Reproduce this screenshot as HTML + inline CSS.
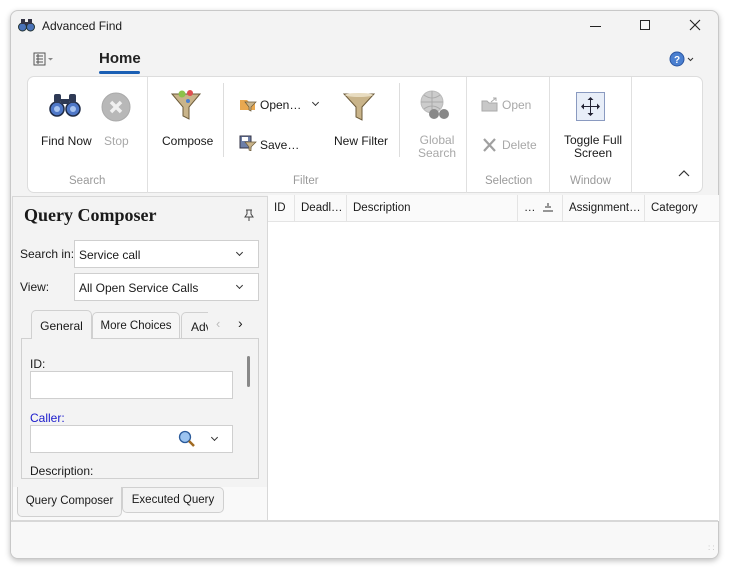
<!DOCTYPE html>
<html><head><style>
*{box-sizing:border-box;margin:0;padding:0}
body{width:729px;height:569px;background:#fff;font-family:"Liberation Sans",sans-serif;font-size:12px;color:#1a1a1a;position:relative;overflow:hidden}
.a{position:absolute;white-space:nowrap}
.win{left:10px;top:10px;width:709px;height:549px;background:#f3f3f3;border:1px solid #c8c8c8;border-radius:8px;box-shadow:0 2px 6px rgba(0,0,0,.25);overflow:hidden}
.lbl{color:#9a9a9a;font-size:11.5px}
.dis{color:#a8a8a8}
.hdr{top:195px;height:27px;border-bottom:1px solid #e4e4e4;border-right:1px solid #e4e4e4;background:#fafafa;padding:7px 6px;font-size:11.5px;white-space:nowrap;overflow:hidden}
.inp{background:#fff;border:1px solid #cfcfcf}
.chev{width:6px;height:6px;border-right:1.3px solid #333;border-bottom:1.3px solid #333;transform:rotate(45deg)}
</style></head><body>
<div class="a win"></div>
<svg class="a" style="left:18px;top:18px" width="17" height="14" viewBox="0 0 17 14"><circle cx="4.5" cy="9" r="4" fill="#4a72b8" stroke="#233" stroke-width="1"/><circle cx="12.5" cy="9" r="4" fill="#4a72b8" stroke="#233" stroke-width="1"/><rect x="3" y="1" width="4" height="5" fill="#334"/><rect x="10" y="1" width="4" height="5" fill="#334"/><rect x="7" y="4" width="3" height="3" fill="#334"/></svg>
<div class="a" style="left:42px;top:19px;font-size:12px">Advanced Find</div>
<div class="a" style="left:590px;top:26px;width:11px;height:1px;background:#222"></div>
<div class="a" style="left:640px;top:20px;width:10px;height:10px;border:1px solid #222"></div>
<svg class="a" style="left:689px;top:19px" width="12" height="12"><path d="M1 1L11 11M11 1L1 11" stroke="#222" stroke-width="1.1"/></svg>
<svg class="a" style="left:33px;top:52px" width="22" height="14"><rect x="1" y="1" width="11" height="12" fill="none" stroke="#555"/><path d="M3 4h7M3 7h7M3 10h7M5 2v10" stroke="#555"/><path d="M15 6l2.5 2.5L20 6z" fill="#888"/></svg>
<div class="a" style="left:99px;top:50px;font-size:15px;font-weight:bold;color:#222">Home</div>
<div class="a" style="left:99px;top:71px;width:41px;height:3px;background:#1a5fb4;border-radius:2px"></div>
<svg class="a" style="left:669px;top:51px" width="28" height="16"><circle cx="8" cy="8" r="7" fill="#4a7fd0" stroke="#2a55a0"/><text x="8" y="12" font-size="10" font-weight="bold" fill="#fff" text-anchor="middle" font-family="Liberation Sans">?</text><path d="M19 7l2.5 2.5L24 7" stroke="#333" fill="none"/></svg>
<div class="a" style="left:27px;top:76px;width:676px;height:117px;background:#fff;border:1px solid #ddd;border-radius:7px"></div>
<div class="a" style="left:147px;top:77px;width:1px;height:116px;background:#e0e0e0"></div>
<div class="a" style="left:466px;top:77px;width:1px;height:116px;background:#e0e0e0"></div>
<div class="a" style="left:549px;top:77px;width:1px;height:116px;background:#e0e0e0"></div>
<div class="a" style="left:631px;top:77px;width:1px;height:116px;background:#e0e0e0"></div>
<div class="a" style="left:223px;top:83px;width:1px;height:74px;background:#ddd"></div>
<div class="a" style="left:399px;top:83px;width:1px;height:74px;background:#ddd"></div>
<svg class="a" style="left:49px;top:92px" width="32" height="26"><circle cx="8" cy="17" r="7" fill="#4f78c8" stroke="#1e2a44" stroke-width="1.5"/><circle cx="24" cy="17" r="7" fill="#4f78c8" stroke="#1e2a44" stroke-width="1.5"/><rect x="5" y="2" width="7" height="9" rx="2" fill="#2e3a55"/><rect x="20" y="2" width="7" height="9" rx="2" fill="#2e3a55"/><rect x="12" y="7" width="8" height="5" fill="#2e3a55"/><circle cx="8" cy="17" r="3" fill="#a8c4f0"/><circle cx="24" cy="17" r="3" fill="#a8c4f0"/></svg>
<div class="a" style="left:41px;top:134px">Find Now</div>
<svg class="a" style="left:101px;top:92px" width="30" height="30"><circle cx="15" cy="15" r="14" fill="#b8b8b8" stroke="#aaa"/><path d="M10 10l10 10M20 10l-10 10" stroke="#f0f0f0" stroke-width="3.5"/></svg>
<div class="a dis" style="left:104px;top:134px">Stop</div>
<div class="a lbl" style="left:69px;top:175px">Search</div>
<svg class="a" style="left:170px;top:89px" width="32" height="32"><path d="M2 5h28L19 18v12l-6 -3V18z" fill="#c9b48a" stroke="#6b5a3a"/><circle cx="12" cy="5" r="3.5" fill="#8cc24a"/><circle cx="20" cy="4" r="3" fill="#e05050"/><circle cx="18" cy="12" r="2" fill="#4a7fd0"/></svg>
<div class="a" style="left:162px;top:134px">Compose</div>
<svg class="a" style="left:239px;top:96px" width="18" height="16"><path d="M1 4h7l2 2h6v8H1z" fill="#e8a850"/><path d="M6 6h11l-5 5v4l-2-1v-3z" fill="#c9b48a" stroke="#6b5a3a" stroke-width=".7"/></svg>
<div class="a" style="left:260px;top:98px">Open…</div>
<div class="a chev" style="left:313px;top:100px;width:5px;height:5px"></div>
<svg class="a" style="left:239px;top:135px" width="18" height="16"><rect x="1" y="1" width="11" height="12" fill="#6d7fa8" stroke="#334"/><rect x="3" y="2" width="6" height="4" fill="#fff"/><path d="M6 7h11l-5 5v4l-2-1v-3z" fill="#c9b48a" stroke="#6b5a3a" stroke-width=".7"/></svg>
<div class="a" style="left:260px;top:138px">Save…</div>
<svg class="a" style="left:343px;top:91px" width="32" height="30"><path d="M1 3h30L19 16v13l-6-3V16z" fill="#c9b48a" stroke="#6b5a3a"/><ellipse cx="16" cy="4" rx="14" ry="2" fill="#e8dcc0"/></svg>
<div class="a" style="left:334px;top:134px">New Filter</div>
<svg class="a" style="left:418px;top:90px" width="32" height="32"><circle cx="14" cy="12" r="11" fill="#ccc" stroke="#bbb"/><path d="M3 12h22M14 1v22M6 5q8 6 16 0M6 19q8-6 16 0" stroke="#aaa" fill="none"/><circle cx="16" cy="24" r="5" fill="#888"/><circle cx="26" cy="24" r="5" fill="#888"/></svg>
<div class="a dis" style="left:418px;top:134px;text-align:center;line-height:13px">Global<br>Search</div>
<div class="a lbl" style="left:293px;top:175px">Filter</div>
<svg class="a" style="left:481px;top:96px" width="18" height="16"><path d="M1 5h5l2 2h8v8H1z" fill="#c8c8c8" stroke="#aaa"/><path d="M10 6l5-4M12 2h3v3" stroke="#aaa" fill="none"/></svg>
<div class="a dis" style="left:502px;top:98px">Open</div>
<svg class="a" style="left:482px;top:137px" width="15" height="15"><path d="M2 2l11 12M13 2L2 14" stroke="#a0a0a0" stroke-width="2.2"/></svg>
<div class="a dis" style="left:502px;top:138px">Delete</div>
<div class="a lbl" style="left:485px;top:175px">Selection</div>
<svg class="a" style="left:576px;top:92px" width="29" height="29"><rect x=".5" y=".5" width="28" height="28" fill="#e8eef8" stroke="#8a9ac0"/><path d="M14.5 8v13M8 14.5h13" stroke="#223" stroke-width="1"/><path d="M14.5 5l-3 3h6zM14.5 24l-3-3h6zM5 14.5l3-3v6zM24 14.5l-3-3v6z" fill="#223"/></svg>
<div class="a" style="left:564px;top:134px;text-align:center;line-height:13px">Toggle Full<br>Screen</div>
<div class="a lbl" style="left:570px;top:175px">Window</div>
<svg class="a" style="left:678px;top:169px" width="12" height="8"><path d="M1 7l5-5 5 5" stroke="#333" fill="none" stroke-width="1.2"/></svg>
<div class="a" style="left:268px;top:195px;width:451px;height:326px;background:#fff"></div>
<div class="a hdr" style="left:268px;width:27px">ID</div>
<div class="a hdr" style="left:295px;width:52px">Deadl…</div>
<div class="a hdr" style="left:347px;width:171px">Description</div>
<div class="a hdr" style="left:518px;width:45px">…</div>
<svg class="a" style="left:542px;top:202px" width="12" height="10"><path d="M1 9h10M3 5h6M6 1v3" stroke="#333"/></svg>
<div class="a hdr" style="left:563px;width:82px">Assignment…</div>
<div class="a hdr" style="left:645px;width:74px;border-right:none">Category</div>
<div class="a" style="left:12px;top:196px;width:256px;height:325px;background:#f3f3f3;border:1px solid #d8d8d8"></div>
<div class="a" style="left:24px;top:205px;font-size:18px;font-weight:bold;font-family:'Liberation Serif',serif">Query Composer</div>
<svg class="a" style="left:244px;top:209px" width="10" height="12"><path d="M2 1h6M3 1v4l-2 3h8l-2-3V1M5 8v4" stroke="#444" fill="none"/></svg>
<div class="a" style="left:20px;top:247px">Search in:</div>
<div class="a inp" style="left:74px;top:240px;width:185px;height:28px;padding:7px 4px">Service call</div>
<div class="a chev" style="left:237px;top:250px;width:5px;height:5px"></div>
<div class="a" style="left:20px;top:280px">View:</div>
<div class="a inp" style="left:74px;top:273px;width:185px;height:28px;padding:7px 4px">All Open Service Calls</div>
<div class="a chev" style="left:237px;top:283px;width:5px;height:5px"></div>
<div class="a" style="left:21px;top:338px;width:238px;height:141px;background:#f3f3f3;border:1px solid #d0d0d0"></div>
<div class="a" style="left:31px;top:310px;width:61px;height:29px;background:#f3f3f3;border:1px solid #d0d0d0;border-bottom:none;border-radius:5px 5px 0 0;padding:8px 0;text-align:center">General</div>
<div class="a" style="left:92px;top:312px;width:88px;height:27px;background:#f6f6f6;border:1px solid #d0d0d0;border-radius:5px 5px 0 0;padding:7px 0;text-align:center;font-size:11.5px">More Choices</div>
<div class="a" style="left:181px;top:312px;width:27px;height:27px;border:1px solid #d0d0d0;border-right:none;border-radius:5px 0 0 0;padding:7px 9px;overflow:hidden">Adv</div>
<div class="a" style="left:216px;top:316px;color:#bbb;font-size:13px">‹</div>
<div class="a" style="left:238px;top:315px;font-size:14px">›</div>
<div class="a" style="left:30px;top:357px">ID:</div>
<div class="a inp" style="left:30px;top:371px;width:203px;height:28px"></div>
<div class="a" style="left:247px;top:356px;width:3px;height:31px;background:#888;border-radius:2px"></div>
<div class="a" style="left:30px;top:411px;color:#1a1acc">Caller:</div>
<div class="a inp" style="left:30px;top:425px;width:203px;height:28px"></div>
<svg class="a" style="left:178px;top:430px" width="17" height="17"><circle cx="7" cy="7" r="5.5" fill="#9cc4f0" stroke="#2a5a9a" stroke-width="1.3"/><path d="M11 11l5 5" stroke="#a06a20" stroke-width="2.5"/></svg>
<div class="a chev" style="left:212px;top:435px;width:5px;height:5px"></div>
<div class="a" style="left:30px;top:464px">Description:</div>
<div class="a" style="left:13px;top:487px;width:254px;height:33px;background:#f9f9f9"></div>
<div class="a" style="left:17px;top:487px;width:105px;height:30px;background:#f3f3f3;border:1px solid #d0d0d0;border-top:none;border-radius:0 0 5px 5px;padding:8px 0;text-align:center;font-size:11.5px">Query Composer</div>
<div class="a" style="left:122px;top:487px;width:102px;height:26px;background:#f3f3f3;border:1px solid #d0d0d0;border-radius:0 5px 5px 5px;padding:6px 0;text-align:center;font-size:11.5px">Executed Query</div>
<div class="a" style="left:11px;top:520px;width:707px;height:2px;background:#d8d8d8"></div>
<div class="a" style="left:11px;top:522px;width:707px;height:36px;background:#f8f8f8;border-radius:0 0 7px 7px"></div>
<div class="a" style="left:708px;top:546px;font-size:8px;color:#bbb;line-height:4px">: :</div>
</body></html>
